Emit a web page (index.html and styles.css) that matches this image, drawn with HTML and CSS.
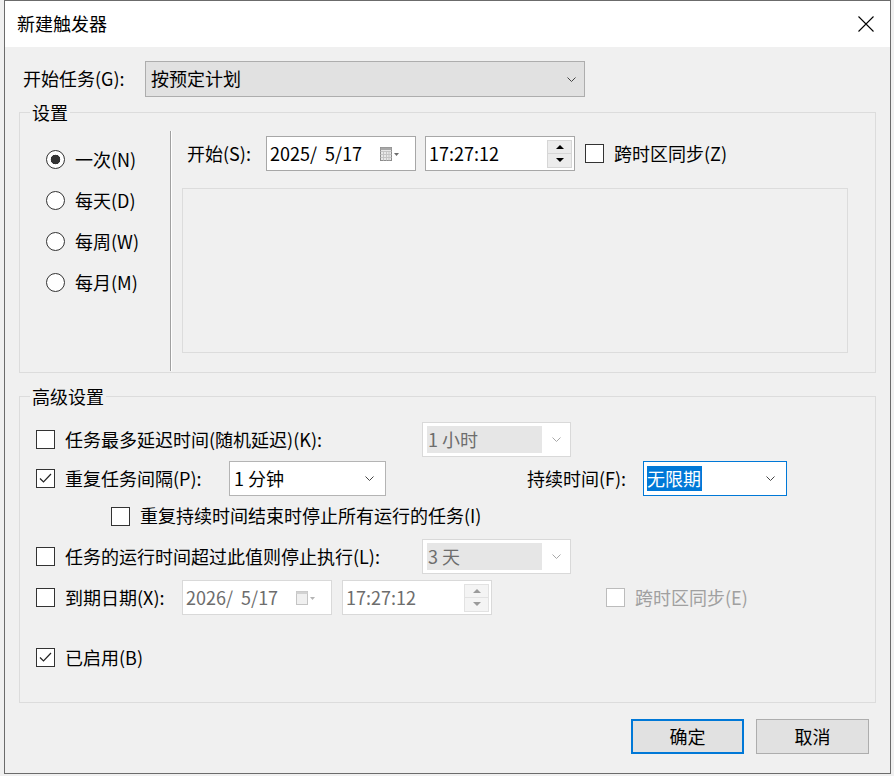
FILE: index.html
```html
<!DOCTYPE html>
<html lang="zh-CN">
<head>
<meta charset="utf-8">
<title>新建触发器</title>
<link rel="stylesheet" href="styles.css">
</head>
<body>
<div class="window">
  <div class="titlebar">
    <span class="title">新建触发器</span>
    <span class="close"><svg width="16" height="16" viewBox="0 0 16 16"><path d="M0.5 0.5L15.5 15.5M15.5 0.5L0.5 15.5" stroke="#000" stroke-width="1.1" fill="none"/></svg></span>
  </div>
  <div class="content">
    <div class="start-row">
      <span class="lbl-begin">开始任务(G):</span>
      <div class="combo combo-main">
        <span>按预定计划</span>
        <svg class="chev" width="9" height="5" viewBox="0 0 9 5"><polyline points="0.5,0.5 4.5,4.5 8.5,0.5" fill="none" stroke="#444" stroke-width="1"/></svg>
      </div>
    </div>

    <div class="group group-settings">
      <div class="legend">设置</div>
      <div class="settings-body">
        <div class="radios">
          <div class="radio-row"><span class="radio checked"></span><span>一次(N)</span></div>
          <div class="radio-row"><span class="radio"></span><span>每天(D)</span></div>
          <div class="radio-row"><span class="radio"></span><span>每周(W)</span></div>
          <div class="radio-row"><span class="radio"></span><span>每月(M)</span></div>
        </div>
        <div class="vsep"></div>
        <div class="pane">
          <div class="date-row">
            <span class="lbl-s">开始(S):</span>
            <div class="field">
              <span class="ftext">2025/  5/17</span>
              <svg class="cal" width="20" height="14" viewBox="0 0 20 14"><rect x="0.5" y="0.5" width="11" height="13" fill="#e8e8e8" stroke="#8c8c8c"/><path d="M0.5 4.5H11.5M0.5 7.5H11.5M0.5 10.5H11.5M3.5 4.5V13.5M6.5 4.5V13.5M9 4.5V13.5" stroke="#c4c4c4" stroke-width="1"/><rect x="0.5" y="0.5" width="11" height="2.5" fill="#a8a8a8"/><path d="M14 6H19L16.5 9Z" fill="#6d6d6d"/></svg>
            </div>
            <div class="field time">
              <span class="ftext">17:27:12</span>
              <div class="spin">
                <span class="spin-btn"><svg width="8" height="4" viewBox="0 0 8 4"><path d="M0 4H8L4 0Z" fill="#000"/></svg></span>
                <span class="spin-btn"><svg width="8" height="4" viewBox="0 0 8 4"><path d="M0 0H8L4 4Z" fill="#000"/></svg></span>
              </div>
            </div>
            <span class="check check-z"></span>
            <span class="check-label">跨时区同步(Z)</span>
          </div>
          <div class="panel"></div>
        </div>
      </div>
    </div>

    <div class="group group-adv">
      <div class="legend">高级设置</div>
      <div class="adv-body">
        <div class="arow r1">
          <span class="check"></span>
          <span class="alabel w-long">任务最多延迟时间(随机延迟)(K):</span>
          <div class="combo combo-dis">
            <span class="dis-inner">1 小时</span>
            <svg class="chev" width="9" height="5" viewBox="0 0 9 5"><polyline points="0.5,0.5 4.5,4.5 8.5,0.5" fill="none" stroke="#a8a8a8" stroke-width="1"/></svg>
          </div>
        </div>
        <div class="arow r2">
          <span class="check checked"><svg width="17" height="17" viewBox="0 0 17 17"><polyline points="3,8.5 6.5,12 14,4" fill="none" stroke="#222" stroke-width="1.2"/></svg></span>
          <span class="alabel w-repeat">重复任务间隔(P):</span>
          <div class="combo combo-edit">
            <span>1 分钟</span>
            <svg class="chev" width="9" height="5" viewBox="0 0 9 5"><polyline points="0.5,0.5 4.5,4.5 8.5,0.5" fill="none" stroke="#444" stroke-width="1"/></svg>
          </div>
          <span class="alabel w-dur">持续时间(F):</span>
          <div class="combo combo-edit combo-focus">
            <span class="sel">无限期</span>
            <svg class="chev" width="9" height="5" viewBox="0 0 9 5"><polyline points="0.5,0.5 4.5,4.5 8.5,0.5" fill="none" stroke="#444" stroke-width="1"/></svg>
          </div>
        </div>
        <div class="arow r3">
          <span class="check indent"></span>
          <span class="alabel">重复持续时间结束时停止所有运行的任务(I)</span>
        </div>
        <div class="arow r4">
          <span class="check"></span>
          <span class="alabel w-long">任务的运行时间超过此值则停止执行(L):</span>
          <div class="combo combo-dis">
            <span class="dis-inner">3 天</span>
            <svg class="chev" width="9" height="5" viewBox="0 0 9 5"><polyline points="0.5,0.5 4.5,4.5 8.5,0.5" fill="none" stroke="#a8a8a8" stroke-width="1"/></svg>
          </div>
        </div>
        <div class="arow r5">
          <span class="check"></span>
          <span class="alabel w-exp">到期日期(X):</span>
          <div class="field dis">
            <span class="ftext">2026/  5/17</span>
            <svg class="cal" width="20" height="14" viewBox="0 0 20 14"><rect x="0.5" y="0.5" width="11" height="13" fill="#f0f0f0" stroke="#c4c4c4"/><rect x="0.5" y="0.5" width="11" height="2.5" fill="#d2d2d2"/><path d="M14 6H19L16.5 9Z" fill="#b4b4b4"/></svg>
          </div>
          <div class="field dis time">
            <span class="ftext">17:27:12</span>
            <div class="spin dis-spin">
              <span class="spin-btn"><svg width="8" height="4" viewBox="0 0 8 4"><path d="M0 4H8L4 0Z" fill="#9a9a9a"/></svg></span>
              <span class="spin-btn"><svg width="8" height="4" viewBox="0 0 8 4"><path d="M0 0H8L4 4Z" fill="#9a9a9a"/></svg></span>
            </div>
          </div>
          <span class="check check-dis"></span>
          <span class="alabel dis-label">跨时区同步(E)</span>
        </div>
        <div class="arow r6">
          <span class="check checked"><svg width="17" height="17" viewBox="0 0 17 17"><polyline points="3,8.5 6.5,12 14,4" fill="none" stroke="#222" stroke-width="1.2"/></svg></span>
          <span class="alabel">已启用(B)</span>
        </div>
      </div>
    </div>

    <div class="buttons">
      <div class="btn primary">确定</div>
      <div class="btn">取消</div>
    </div>
  </div>
</div>
</body>
</html>
```

FILE: styles.css
```css
* { box-sizing: border-box; }
html, body { margin: 0; padding: 0; }
body {
  width: 894px;
  height: 776px;
  overflow: hidden;
  background: #f0f0f0;
  font-family: "Noto Sans CJK SC", "Noto Sans", sans-serif;
  font-size: 18px;
  line-height: 1.2;
  color: #000;
}
.window {
  margin-left: 4px;
  width: 887px;
  height: 774px;
  border: 1px solid #6b6b6b;
  background: #f0f0f0;
}
.titlebar {
  height: 46px;
  background: #fff;
  display: flex;
  align-items: center;
  justify-content: space-between;
  padding: 0 16px 0 12px;
}
.close { display: flex; }
.content { padding: 14px 14px 0 14px; }

.start-row { display: flex; align-items: center; height: 36px; padding-left: 4px; }
.lbl-begin { width: 122px; }
.combo {
  display: flex;
  align-items: center;
  justify-content: space-between;
  height: 35px;
}
.combo-main {
  width: 440px;
  height: 36px;
  background: #e1e1e1;
  border: 1px solid #adadad;
  padding: 0 8px 0 5px;
}

.group { border: 1px solid #dcdcdc; }
.legend {
  display: table;
  margin: -13px 0 0 10px;
  padding: 0 2px;
  height: 24px;
  line-height: 24px;
  background: #f0f0f0;
}
.group-settings { margin-top: 15px; }
.settings-body { display: flex; height: 248px; }
.radios { width: 150px; padding: 15px 0 0 26px; }
.radio-row { display: flex; align-items: center; gap: 10px; height: 41px; }
.radio {
  width: 19px;
  height: 19px;
  border: 1.5px solid #333;
  border-radius: 50%;
  background: #fff;
}
.radio.checked { background: radial-gradient(circle at center, #333 0 4.5px, #fff 5.1px); }
.vsep {
  width: 2px;
  margin: 7px 0 1px;
  border-left: 1px solid #a0a0a0;
  border-right: 1px solid #fff;
}
.pane { flex: 1; padding: 12px 0 0 10px; }
.date-row { display: flex; align-items: center; height: 35px; padding-left: 5px; }
.lbl-s { width: 79px; }
.field {
  width: 150px;
  height: 35px;
  border: 1px solid #a7a7a7;
  background: #fff;
  display: flex;
  align-items: center;
  padding-left: 3px;
}
.field.time { margin-left: 9px; }
.ftext { white-space: pre; }
.cal { margin-left: auto; margin-right: 15px; }
.spin {
  margin-left: auto;
  margin-right: 2px;
  display: flex;
  flex-direction: column;
}
.spin-btn {
  width: 25px;
  height: 14px;
  display: flex;
  align-items: center;
  justify-content: center;
  background: #ececec;
  border: 1px solid #d6d6d6;
}
.spin-btn + .spin-btn { border-top: 0; }
.check {
  flex: none;
  width: 19px;
  height: 19px;
  border: 1px solid #333;
  background: #fff;
  display: flex;
  align-items: center;
  justify-content: center;
}
.check-z { margin-left: 10px; }
.check-label { margin-left: 10px; }
.panel {
  margin-top: 17px;
  width: 666px;
  height: 165px;
  border: 1px solid #dcdcdc;
}

.group-adv { margin-top: 23px; }
.adv-body { padding: 14px 0 27px 16px; }
.arow { display: flex; align-items: center; height: 35px; }
.arow .alabel { margin-left: 10px; white-space: nowrap; }
.r2 { margin-top: 4px; }
.r3 { height: 40px; }
.r4 { margin-top: 3px; }
.r5 { margin-top: 6px; }
.r6 { margin-top: 25px; }
.w-long { width: 357px; flex: none; }
.w-repeat { width: 164px; flex: none; }
.w-exp { width: 117px; flex: none; }
.arow .w-dur { margin-left: 141px; width: 116px; flex: none; }
.indent { margin-left: 75px; }

.combo-edit {
  width: 157px;
  background: #fff;
  border: 1px solid #b4b4b4;
  padding: 0 11px 0 4px;
}
.combo-focus { width: 144px; border-color: #0078d7; padding-left: 3px; }
.sel {
  background: #0078d7;
  color: #fff;
  line-height: 25px;
  padding: 0 1px 0 0;
}
.combo-dis {
  width: 149px;
  background: #fff;
  border: 1px solid #d9d9d9;
  padding: 3px 9px 3px 4px;
}
.dis-inner {
  width: 115px;
  height: 27px;
  line-height: 27px;
  background: #e6e6e6;
  color: #6d6d6d;
  padding-left: 1px;
}
.field.dis { border-color: #d9d9d9; color: #6d6d6d; }
.field.dis.time { margin-left: 10px; }
.dis-spin .spin-btn { background: #f4f4f4; border-color: #e2e2e2; }
.check-dis { margin-left: 114px; border-color: #bcbcbc; }
.arow .dis-label { color: #a0a0a0; }

.buttons {
  display: flex;
  justify-content: flex-end;
  gap: 12px;
  margin-top: 16px;
  padding-right: 7px;
}
.btn {
  width: 113px;
  height: 35px;
  background: #e1e1e1;
  border: 1px solid #adadad;
  display: flex;
  align-items: center;
  justify-content: center;
}
.btn.primary { border: 2px solid #0078d7; }
```
